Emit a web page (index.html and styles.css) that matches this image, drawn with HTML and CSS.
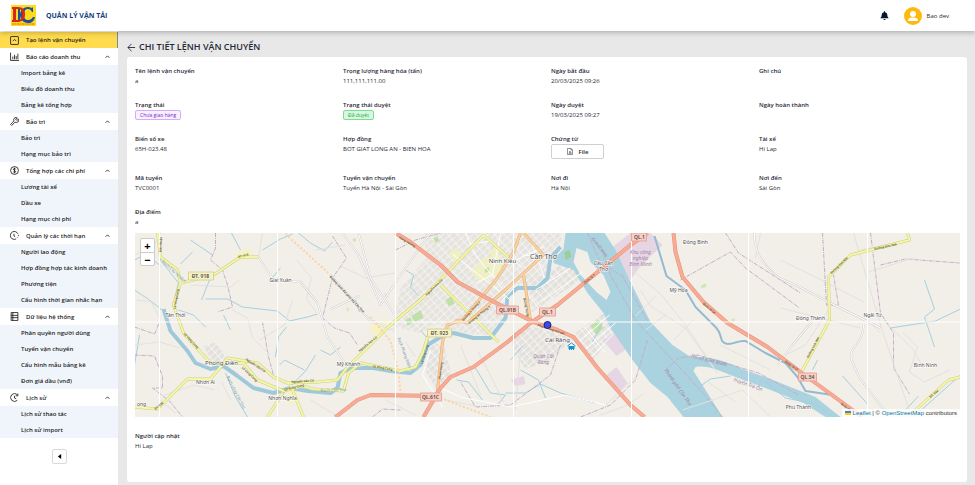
FILE: index.html
```html
<!DOCTYPE html>
<html lang="vi">
<head>
  <meta charset="UTF-8" />
  <meta name="viewport" content="width=device-width, initial-scale=1.0" />
  <title>Quản lý vận tải</title>
  <link rel="stylesheet" href="styles.css">
</head>
<body>
  <header class="topbar">
    <a class="brand" href="#">
      <svg class="logo" viewBox="0 0 25 21" aria-hidden="true">
        <rect width="25" height="21" fill="#fcdb1c"/>
        <path d="M22 2v5h-1c-1-2-2-3-4-3-3 0-4 2-4 6s2 5 4 5 4-1 5-3h2c-1 4-3 6-7 6-5 0-8-4-8-8s3-8 8-8c2 0 3 1 4 1z" fill="#1d4f9c"/>
        <path d="M1 2h6c5 0 7 3 7 7s-2 8-7 8H1v-2h1V4H1zM5 4v11h2c3 0 4-2 4-6s-1-5-4-5z" fill="#d8251d" fill-rule="evenodd"/>
        <path d="M8 4v11" fill="none" stroke="#1d4f9c" stroke-width="2"/>
        <path d="M1 19h23" stroke="#e06c2a" stroke-width="1" stroke-dasharray="2 .5"/>
      </svg>
      <span>QUẢN LÝ VẬN TẢI</span>
    </a>
    <div class="account">
      <button class="bell" aria-label="Thông báo">
        <svg viewBox="0 0 16 16"><path d="M8 0a1 1 0 0 0-1 1v1C4 2.500 3 5 3 7c0 3-1 4-2 5v1h14v-1c-1-1-2-2-2-5 0-2-1-4.500-4-5V1a1 1 0 0 0-1-1zM6 14a2 2 0 0 0 4 0z" fill="#0b1633"/></svg>
      </button>
      <svg class="avatar" viewBox="0 0 18 18" aria-hidden="true">
        <circle cx="9" cy="9" r="9" fill="#ffb80c"/>
        <circle cx="9" cy="7" r="3" fill="#fff"/>
        <path d="M4 14c0-3 2-3.500 5-3.500s5 .5 5 3.500z" fill="#fff"/>
      </svg>
      <span class="user-name">Bao dev</span>
    </div>
  </header>

  <div class="layout">
    <nav class="sidebar">
      <a class="menu-item active" href="#">
        <svg class="icon" viewBox="0 0 16 16"><rect x="1" y="1" width="14" height="14" rx="1"/><path d="M5 9l3-3 3 3"/></svg>
        <span>Tạo lệnh vận chuyển</span>
      </a>

      <button class="menu-item">
        <svg class="icon" viewBox="0 0 16 16"><path d="M1 1v14h15M5 13V8M8 13V5M11 13V7M14 13V3"/></svg>
        <span>Báo cáo doanh thu</span>
        <svg class="caret" viewBox="0 0 8 8"><path d="M1 6l3-3 3 3"/></svg>
      </button>
      <div class="submenu">
        <a href="#">Import bảng kê</a>
        <a href="#">Biểu đồ doanh thu</a>
        <a href="#">Bảng kê tổng hợp</a>
      </div>

      <button class="menu-item">
        <svg class="icon" viewBox="0 0 16 16"><path d="M11 1a4 4 0 0 0-4 6l-6 6 2 2 6-6a4 4 0 0 0 6-5l-3 2-2-2 3-2z"/></svg>
        <span>Bảo trì</span>
        <svg class="caret" viewBox="0 0 8 8"><path d="M1 6l3-3 3 3"/></svg>
      </button>
      <div class="submenu">
        <a href="#">Bảo trì</a>
        <a href="#">Hạng mục bảo trì</a>
      </div>

      <button class="menu-item">
        <svg class="icon" viewBox="0 0 16 16"><circle cx="8" cy="8" r="7"/><path d="M10 6c0-1-1-1.500-2-1.500S6 5 6 6c0 2 4 2 4 4 0 1-1 1.500-2 1.500S6 11 6 10M8 3v10"/></svg>
        <span>Tổng hợp các chi phí</span>
        <svg class="caret" viewBox="0 0 8 8"><path d="M1 6l3-3 3 3"/></svg>
      </button>
      <div class="submenu">
        <a href="#">Lương tài xế</a>
        <a href="#">Dầu xe</a>
        <a href="#">Hạng mục chi phí</a>
      </div>

      <button class="menu-item">
        <svg class="icon" viewBox="0 0 16 16"><path d="M11 14A7 7 0 1 1 14 5M7 5v4l2 1M15 7v2M14 11l-1 1"/></svg>
        <span>Quản lý các thời hạn</span>
        <svg class="caret" viewBox="0 0 8 8"><path d="M1 6l3-3 3 3"/></svg>
      </button>
      <div class="submenu">
        <a href="#">Người lao động</a>
        <a href="#">Hợp đồng hợp tác kinh doanh</a>
        <a href="#">Phương tiện</a>
        <a href="#">Cấu hình thời gian nhắc hạn</a>
      </div>

      <button class="menu-item">
        <svg class="icon" viewBox="0 0 16 16"><path d="M2 1h12v14H2zM2 6h12M2 10h12M5 1v14"/></svg>
        <span>Dữ liệu hệ thống</span>
        <svg class="caret" viewBox="0 0 8 8"><path d="M1 6l3-3 3 3"/></svg>
      </button>
      <div class="submenu">
        <a href="#">Phân quyền người dùng</a>
        <a href="#">Tuyến vận chuyển</a>
        <a href="#">Cấu hình mẫu bảng kê</a>
        <a href="#">Đơn giá dầu (vnđ)</a>
      </div>

      <button class="menu-item">
        <svg class="icon" viewBox="0 0 16 16"><path d="M13 13A7 7 0 1 1 13 3M14 1v4h-4M8 5v4l3 1"/></svg>
        <span>Lịch sử</span>
        <svg class="caret" viewBox="0 0 8 8"><path d="M1 6l3-3 3 3"/></svg>
      </button>
      <div class="submenu">
        <a href="#">Lịch sử thao tác</a>
        <a href="#">Lịch sử import</a>
      </div>

      <button class="collapse" aria-label="Thu gọn">
        <svg viewBox="0 0 6 6"><path d="M5 0v6L1 3z"/></svg>
      </button>
    </nav>

    <main class="content">
      <h1 class="page-title">
        <a href="#" aria-label="Quay lại"><svg viewBox="0 0 10 10"><path d="M9 5H1M5 1L1 5l4 4"/></svg></a>
        CHI TIẾT LỆNH VẬN CHUYỂN
      </h1>

      <section class="card">
        <dl class="details">
          <div><dt>Tên lệnh vận chuyển</dt><dd>a</dd></div>
          <div><dt>Trọng lượng hàng hóa (tấn)</dt><dd>111,111,111.00</dd></div>
          <div><dt>Ngày bắt đầu</dt><dd>20/03/2025 09:26</dd></div>
          <div><dt>Ghi chú</dt><dd></dd></div>
          <div><dt>Trạng thái</dt><dd><span class="tag tag-purple">Chưa giao hàng</span></dd></div>
          <div><dt>Trạng thái duyệt</dt><dd><span class="tag tag-green">Đã duyệt</span></dd></div>
          <div><dt>Ngày duyệt</dt><dd>19/03/2025 09:27</dd></div>
          <div><dt>Ngày hoàn thành</dt><dd></dd></div>
          <div><dt>Biển số xe</dt><dd>65H-023.48</dd></div>
          <div><dt>Hợp đồng</dt><dd>BOT GIAT LONG AN - BIEN HOA</dd></div>
          <div>
            <dt>Chứng từ</dt>
            <dd>
              <button class="file-btn">
                <svg viewBox="0 0 12 14"><path d="M1 1h7l3 3v9H1zM8 1v3h3M4 11l2-5 1 3 2 1-5 1"/></svg>
                File
              </button>
            </dd>
          </div>
          <div><dt>Tài xế</dt><dd>Hi Lap</dd></div>
          <div><dt>Mã tuyến</dt><dd>TVC0001</dd></div>
          <div><dt>Tuyến vận chuyển</dt><dd>Tuyến Hà Nội - Sài Gòn</dd></div>
          <div><dt>Nơi đi</dt><dd>Hà Nội</dd></div>
          <div><dt>Nơi đến</dt><dd>Sài Gòn</dd></div>
          <div><dt>Địa điểm</dt><dd>a</dd></div>
        </dl>

        <div class="map">
          <svg class="map-canvas" viewBox="134 233 826 184" preserveAspectRatio="xMidYMid slice">
            <defs>
              <pattern id="streets" width="7" height="5" patternUnits="userSpaceOnUse" patternTransform="rotate(-42)">
                <rect width="7" height="5" fill="#e6e3df"/>
                <path d="M0 0h7M0 0v5" stroke="#fff" stroke-width="1"/>
                <path d="M3 2h4" stroke="#d0cccb" stroke-width=".4"/>
              </pattern>
              <path id="provincial" d="M157 233l3 24 17 13 3 13 33-8 27-18h18M180 283l-7 22 10 28 27 30 33 0 14 17 26 11 20-5 9 3 31 2 5-18 12-10 40 8 15-4 8-16 4-14 10-8M483 235l-60 62-33 28-43 42-10 13-20 2-30 1-14-6-16-14-30-5-7 9-10 12h-23l-30 30-23-2M440 285l58 57M483 235l28 25M290 385l13 32M282 393l-15 24M907 233l2 7-59 15-22 22 1 43-27 50M960 377l-12 3-35 32"/>
              <path id="secondary" d="M520 233l-7 19-16 26-35 42-15 5-5 17-5 50M523 233l20 22-36 33-40 35-12-3M523 275l7 45"/>
              <path id="trunk" d="M423 417l17-29 10-11 23-10 34-25 23-19 27-18 73-60 17-12M395 233l15 9 30 23 17 17 33 18 43 22 24 8 16 7 24 31 33 37 14 12M440 396l-70-1-13 5-22 17M673 233l2 19 7 25 21 25 24 21 40 24 33 25 52 38 10 7"/>
            </defs>

            <!-- built-up areas -->
            <g fill="url(#streets)">
              <path d="M424 233h138l-3 14-9 10-3 20-11 9-20 1-12 10-2 20-14 18-28-2-23-9-19 9-26-7 8-38 26-30z" opacity=".8"/>
              <path d="M523 283l45-22 14 18-50 33zM512 330l22-3 40 12-24 22-25 8-13-20zM575 333l29-21 14 19-26 29zM430 340l14 8 7 26-16 14-10-17z"/>
              <path d="M203 346l13-4 9 16-12 9z"/>
            </g>
            <g>
              <path d="M233 255l15-7 5 8-14 6zM368 327l20-8-7 16-8-1zM284 393l11-3 5 9-12 6z" fill="#f6f2c4"/>
              <path d="M448 253l8-5 6 8-7 7zM470 272l14-15 18 1-2 14-19 10zM488 251l8-3 4 9-7 3z" fill="#f0f0c6"/>
              <path d="M411 316l9-6 3 8-9 4zM405 320l5-3 2 6-5 3zM445 300l6-4 3 8-6 2zM484 270l4-3 1 4-4 2zM590 326l8-6 5 8-7 7zM433 238l4-1 2 4-4 2z" fill="#bfe0a9"/>
              <path d="M612 247l18-14h20l12 12-22 21-10 14-13-15zM602 340l16-8 8 17-10 7zM606 375l10-8 11 16-9 10zM510 380l13-4 2 8-10 2z" fill="#e6d6e4"/>
              <path d="M700 286l5-3 1 4-5 1zM730 320l4-2 0 4zM352 239l3-1 1 3-3 1zM346 307l3 2-2 3zM384 293l4 3-3 2z" fill="#cce8b4"/>
            </g>

            <!-- rivers -->
            <path class="water" d="M565 233h39l11 17 18 38 17 34 22 23 18 12c18-1 35 4 52 12l33 12 40 16 25 20h-15l-22-14-33-13-35-13c-18-7-28-12-40-10l-2 4 14 22 15 24h-39l-16-20-17-14-18-23-22-32-7-15-16-20-14-23-20-7 0-4 10-10z"/>
            <path d="M576 248l11 4 3 10 13 13 7 17-4 8-10-8-16-17-7-13z" fill="#f2efe9"/>
            <path d="M564 252l5-2 2 7-6 3z" fill="#9ccf93"/>
            <path class="river" d="M560 247l-10 11-3 20-10 10-20 0-10 8-2 22-15 20-17 0-20-5-13 4-13 8-7 20-10 8-20-2-17-3-23 0-10 5-3 15-7 5-23-2-17-3-17 5-20-5-16-12-14-10-13 3-15-6-8-12-17-20-7-22"/>
            <g class="canal">
              <path d="M173 303l5-20-18-23-2-27M134 260l12-6 14 12M134 290l15 10 15 12M178 310l15 5 12 12M201 300l8-20M205 299l22 0 15 8 35 4 12 10 18-4 10-3"/>
              <path d="M134 365l5-30M225 373l10 24 12 20M267 417l18-26 20-20 10-16M304 370l-20-10-5 5M320 350l10 5 10-8M286 327l-8 10-3 20M230 330l-7-15"/>
              <path d="M262 250l18-11 12-5M298 233l12 10 14 8 8-9M270 280l10-12M192 252l-12 12M240 250l-9-17M190 240l22 15M355 300l4 12M405 270l8 5-3 12 8 9M420 330l8 10-5 16"/>
              <path d="M475 368l15 25 15 2-8 10M505 393l20 0 15-9 20 9 35 10M545 398l-7-18-18-10M482 400l-14-18-12-2M510 360l12-14M592 342l10-20"/>
              <path d="M700 386l10-7 20-3M765 382l20 16 30 6 18 13M842 376l25 28M812 370l5-10M924 280l10 29-10 8 10 30M890 328l45-7 25-12M905 410l13-14M913 417l47-42"/>
            </g>
            <path class="stream" d="M654 236l12 40 19 14 10 17 20 20c8 8 3 16 12 17 8 0 10-4 18-3l20 12 20 10 12 14 8 14 27 4"/>

            <!-- administrative borders -->
            <g class="border">
              <path d="M215 233v15l-5 12 12 10 5 15 5 22-15 5M134 327l20 7 5-12M134 355l20 1 8 20 0 12-10 0 17 13 13 16M262 322l6 35 5 18M332 236l14 22-14 20-10 40 12 10 15 5 8 12M372 417l10-8 18 1"/>
              <path d="M395 250l20-10 25-7M600 245l10 30 25 45 35 38 30 32 22 27M587 233l13 30 22 13 25 45M647 340l-12 40-25 25-30 12M680 280l50-28 15 16 54 40M725 233l13 20 62 40M822 233l4 72h12l-5-30M870 233l10 80 13 20 0 35 16 26M880 265l25-6 54 4M665 370l13-12 20-3 60 18 40 22M560 345l-10 30-40 30-35 2-15-25"/>
            </g>

            <!-- small roads -->
            <g class="lane">
              <path d="M134 345l25-3 20 6M164 395l30-10 20 5M136 300l15 2 8 16M190 285l40 2 10-8M296 260l15 18-5 20 10 15M160 233l-8 15-18 7M232 310l15 8 5 20 18 17M258 257l4-24M292 300l-8 25-25 15M230 400l-9-18M310 400l25 15M385 400l30 15M405 342l10 15M445 400l30 6M460 345l20 50M478 352l25 50M520 350l-5 60"/>
              <path d="M632 270l30 26 25 32 30 45M655 296l-20 20M640 290l10 16 35 22 28 40M665 315l-20 15M693 320l-20 20M720 345l50 25M705 380l30 22M682 410l60-20 28 27M760 233l-5 25M853 233l28 95 30 89M870 323l10 10M902 332l15 15-8 25 15 10 25-12M780 260l45 22 38 20M780 308l80 20"/>
              <path d="M605 405l30-28M600 415l25-9 18-12M860 250l40-8M868 272l45-14M830 307l-25 38-24 12M893 330l20 20 10 18M160 400l15 13M315 250l30-5M340 266l25 12 30-5"/>
            </g>
            <g class="road-case">
              <path id="roads" d="M258 257l15 23 27 2 17 21 10 34 20 30M330 275l40 46 25 10M342 233l16 22 22 50 20-30 30-42M359 296l-29 13M358 233l12 45 25 38M754 233c-1 20 10 34 25 45l22 10 35 18 44 22M863 325c0 20-15 20-12 35l8 18 30 39M777 365l15-20 20-24"/>
            </g>
            <g class="road">
              <use href="#roads"/>
              <path d="M440 388l20 9 50 10 55-12 40 10M430 350l-8 25 20 32M540 302l42-30M535 290l35-22M575 345l34-30M581 353l34-30M587 361l25-26M584 327l20 25"/>
              <path d="M465 233l10 22 28 35M500 233l-8 42-17 8M452 254l58 46M488 240l34 28M523 255l23 2M530 240l14 38M505 265l38-18M524 290l17 22M517 284l-20 22M470 244l22-3"/>
            </g>

            <!-- provincial and main roads -->
            <use class="yellow-case" href="#provincial"/>
            <use class="yellow-line" href="#provincial"/>
            <use class="orange-case" href="#secondary"/>
            <use class="orange-line" href="#secondary"/>
            <path class="works" d="M285 234l45 41M370 317l20 24 8 30 2 22M440 398l50 19"/>
            <use class="trunk-case" href="#trunk"/>
            <use class="trunk-line" href="#trunk"/>

            <!-- tile seams -->
            <path class="seam" d="M159 233v184M277 233v184M395 233v184M513 233v184M631 233v184M748 233v184M867 233v184M134 322h826"/>

            <g class="shield provincial">
              <rect x="188" y="272" width="25" height="8"/>
              <rect x="427" y="329" width="24" height="8"/>
              <text x="200" y="278">ĐT. 918</text>
              <text x="439" y="335">ĐT. 923</text>
            </g>
            <g class="shield">
              <rect x="496" y="306" width="22" height="8"/>
              <rect x="539" y="308" width="16" height="8"/>
              <rect x="420" y="393" width="21" height="8"/>
              <rect x="631" y="233" width="15" height="8"/>
              <rect x="798" y="373" width="18" height="8"/>
              <text x="507" y="312">QL.91B</text>
              <text x="547" y="314">QL.1</text>
              <text x="430" y="399">QL.61C</text>
              <text x="639" y="239">QL.1</text>
              <text x="807" y="379">QL.54</text>
            </g>

            <g class="road-name">
              <text transform="translate(161 252) rotate(-88)">Bức thuận</text>
              <text transform="translate(175 309) rotate(-80)">Lộ Vòng Cung</text>
              <text transform="translate(183 334) rotate(47)">Lộ Vòng Cung</text>
              <text transform="translate(238 258) rotate(-15)">ĐT. 918</text>
              <text transform="translate(329 277) rotate(47)">Đường vành đai phía tây Cần Thơ</text>
              <text transform="translate(245 360) rotate(33)">Nguyễn Văn Cừ</text>
              <text transform="translate(241 368) rotate(43)">Lộ Vòng Cung</text>
              <text transform="translate(291 383) rotate(-4)">Nguyễn Văn Cừ</text>
              <text transform="translate(284 391) rotate(-14)">Lộ Vòng Cung</text>
              <text transform="translate(359 352) rotate(-39)">Nguyễn Văn Cừ</text>
              <text transform="translate(372 367) rotate(10)">Lộ Vòng Cung</text>
              <text transform="translate(426 296) rotate(-44)">Nguyễn Văn Cừ</text>
              <text transform="translate(422 364) rotate(-72)">Lộ Vòng Cung</text>
              <text transform="translate(463 321) rotate(-48)">Đường 3 Tháng 2</text>
              <text transform="translate(469 324) rotate(-39)">Đường 30 Tháng 4</text>
              <text transform="translate(523 298) rotate(80)">Quang Trung</text>
              <text transform="translate(440 379) rotate(-82)">Phạm Hùng</text>
              <text transform="translate(155 410) rotate(-39)">ĐT. 926</text>
              <text transform="translate(537 326) rotate(18)">Phạm Hùng nối dài</text>
              <text transform="translate(584 284) rotate(-39)">Quốc lộ 1</text>
              <text transform="translate(398 238) rotate(30)">Hùng Vương</text>
              <text transform="translate(702 304) rotate(40)">Quốc lộ 54</text>
              <text transform="translate(784 362) rotate(34)">Quốc lộ 54</text>
              <text transform="translate(840 404) rotate(38)">Quốc lộ</text>
              <text transform="translate(831 274) rotate(-43)">Đường tỉnh 909</text>
              <text transform="translate(874 250) rotate(-12)">Đường tỉnh 909</text>
              <text transform="translate(808 358) rotate(-61)">Đường tỉnh 909</text>
              <text transform="translate(930 398) rotate(-39)">ĐT. 904</text>
            </g>

            <g class="water-name">
              <text transform="translate(161 262) rotate(42)">Rạch Cầu Nhiếm</text>
              <text transform="translate(226 377) rotate(63)">Rạch sông Cần Thơ</text>
              <text transform="translate(397 338) rotate(70)">Rạch Phong Điền</text>
              <text transform="translate(320 392) rotate(-2)">Rạch Cần Thơ</text>
            </g>

            <g class="place">
              <text x="280" y="282">Giai Xuân</text>
              <text x="175" y="317">Tân Thới</text>
              <text x="221" y="365" class="town">Phong Điền</text>
              <text x="205" y="384">Nhơn Ái</text>
              <text x="282" y="400">Nhơn Nghĩa</text>
              <text x="348" y="366">Mỹ Khánh</text>
              <text x="141" y="406">ong</text>
              <text x="502" y="263" class="town">Ninh Kiều</text>
              <text x="543" y="259" class="city">Cần Thơ</text>
              <text x="557" y="342" class="town">Cái Răng</text>
              <text x="603" y="265">Cầu Cần</text>
              <text x="603" y="271">Thơ</text>
              <text x="695" y="244">Đông Bình</text>
              <text x="678" y="292">Mỹ Hòa</text>
              <text x="810" y="320">Đông Thành</text>
              <text x="872" y="317">Ngãi Tứ</text>
              <text x="925" y="367">Bình Ninh</text>
              <text x="798" y="409">Phú Thành</text>
            </g>
            <g class="district">
              <text x="543" y="358">Quận Cái</text>
              <text x="543" y="364">Răng</text>
              <text x="640" y="254">Khu công</text>
              <text x="640" y="260">nghiệp</text>
              <text x="640" y="266">Bình Minh</text>
              <text transform="translate(708 362) rotate(14)">Thị xã Bình Minh</text>
              <text transform="translate(747 386) rotate(20)">Huyện Trà Ôn</text>
              <text transform="translate(676 388) rotate(55)">Thành phố Cần Thơ</text>
              <text class="minor" transform="translate(598 248) rotate(52)">Xã Bình Minh</text>
            </g>

            <path d="M568 346h6v3h-6z" fill="#1591d1"/>
            <path d="M567 346l4-3 4 3M569 347v3M571 347v3M573 347v3" fill="#fff" stroke="#1591d1" stroke-width="1"/>
            <circle cx="547" cy="325" r="3.500" fill="#3f49e8" stroke="#20207c" stroke-width="1"/>
          </svg>

          <div class="zoom-control">
            <button aria-label="Phóng to">+</button>
            <button aria-label="Thu nhỏ">−</button>
          </div>
          <div class="attribution">
            <a href="#"><svg viewBox="0 0 12 8"><path fill="#4c7be1" d="M0 0h12v4H0z"/><path fill="#ffd500" d="M0 4h12v4H0z"/></svg> Leaflet</a>
            | © <a href="#">OpenStreetMap</a> contributors
          </div>
        </div>

        <dl class="details">
          <div><dt>Người cập nhật</dt><dd>Hi Lap</dd></div>
        </dl>
      </section>
    </main>
  </div>
</body>
</html>
```
FILE: styles.css
```css
:root {
  --page-bg: #e8e8e8;
  --text: #1f2937;
  --navy: #173f82;
  --active: #ffdb4d;
  --submenu-bg: #f0f5fb;
}

* {
  box-sizing: border-box;
  margin: 0;
  padding: 0;
}

body {
  display: flex;
  flex-direction: column;
  min-height: 100vh;
  font-family: "Open Sans", "Noto Sans", sans-serif;
  font-size: 6px;
  line-height: 10px;
  color: var(--text);
  background: var(--page-bg);
}

button {
  font: inherit;
  color: inherit;
  background: none;
  border: none;
  cursor: pointer;
}

a {
  color: inherit;
  text-decoration: none;
}

/* Top bar */
.topbar {
  display: flex;
  align-items: center;
  justify-content: space-between;
  height: 31px;
  padding: 0 26px 0 11px;
  background: #fff;
  box-shadow: 0 1px 6px rgba(0, 0, 0, 0.3);
  z-index: 1;
}

.brand {
  display: flex;
  align-items: center;
  gap: 10px;
  font-size: 7px;
  font-weight: 700;
  color: var(--navy);
}

.logo {
  width: 25px;
  height: 21px;
}

.account {
  display: flex;
  align-items: center;
}

.bell {
  display: flex;
  margin-right: 15px;
}

.bell svg {
  width: 9px;
  height: 9px;
}

.avatar {
  width: 18px;
  height: 18px;
  margin-right: 5px;
}

/* Sidebar */
.layout {
  display: flex;
  flex: 1;
}

.sidebar {
  display: flex;
  flex-direction: column;
  width: 118px;
  padding-top: 1px;
  background: #fff;
  flex-shrink: 0;
}

.menu-item {
  display: flex;
  align-items: center;
  gap: 7px;
  height: 17px;
  padding: 0 8px 0 10px;
  font-weight: 600;
  text-align: left;
  color: #1c1c1c;
}

.menu-item.active {
  height: 16px;
  background: var(--active);
  border-right: 1px solid #7787a5;
}

.icon {
  width: 9px;
  height: 9px;
  fill: none;
  stroke: #1c1c1c;
  stroke-width: 1.5;
}

.caret {
  width: 5px;
  height: 5px;
  margin-left: auto;
  fill: none;
  stroke: #333;
  stroke-width: 1.5;
}

.submenu {
  background: var(--submenu-bg);
}

.submenu a {
  display: block;
  padding-left: 21px;
  font-weight: 600;
  line-height: 16px;
  white-space: nowrap;
  color: #1c1c1c;
}

.collapse {
  display: flex;
  align-items: center;
  justify-content: center;
  align-self: center;
  width: 15px;
  height: 15px;
  margin-top: 11px;
  border: 1px solid #d9d9d9;
  border-radius: 2px;
}

.collapse svg {
  width: 5px;
  height: 5px;
}

/* Content */
.content {
  display: flex;
  flex-direction: column;
  flex: 1;
  min-width: 0;
  padding: 10px 8px 3px 9px;
}

.page-title {
  display: flex;
  align-items: center;
  gap: 3px;
  margin-bottom: 4px;
  font-size: 9px;
  font-weight: 600;
  line-height: 12px;
}

.page-title a {
  display: flex;
}

.page-title svg {
  width: 9px;
  height: 9px;
  fill: none;
  stroke: currentColor;
  stroke-width: 1;
}

.card {
  flex: 1;
  padding: 9px 7px 9px 8px;
  background: #fff;
  border-radius: 3px;
}

.details {
  display: grid;
  grid-template-columns: repeat(4, 1fr);
  gap: 14px 7px;
}

.details dt {
  font-weight: 600;
}

.details dd {
  min-height: 10px;
}

.tag {
  display: block;
  width: fit-content;
  padding: 0 4px;
  font-size: 5px;
  line-height: 8px;
  border: 1px solid;
  border-radius: 2px;
}

.tag-purple {
  color: #722ed1;
  background: #f9f0ff;
  border-color: #d3adf7;
}

.tag-green {
  color: #22a843;
  background: #d9f7df;
  border-color: #7edb92;
}

.file-btn {
  display: flex;
  align-items: center;
  justify-content: center;
  gap: 6px;
  width: 53px;
  height: 15px;
  font-weight: 600;
  border: 1px solid #d0d0d0;
  border-radius: 2px;
}

.file-btn svg {
  width: 6px;
  height: 7px;
  fill: none;
  stroke: currentColor;
  stroke-width: 1;
}

/* Map */
.map {
  position: relative;
  height: 184px;
  margin: 6px 0 14px;
  overflow: hidden;
  background: #f2efe9;
}

.map-canvas {
  display: block;
  width: 100%;
  height: 100%;
  font-family: "Noto Sans", sans-serif;
  stroke-linejoin: round;
}

.water {
  fill: #aad3df;
}

.river {
  fill: none;
  stroke: #9fc9da;
  stroke-width: 4;
}

.stream {
  fill: none;
  stroke: #94b9d1;
  stroke-width: 2;
}

.canal {
  fill: none;
  stroke: #a5cfdf;
  stroke-width: 1;
}

.border {
  fill: none;
  stroke: #c4adc6;
  stroke-width: 1;
  stroke-dasharray: 4 1 1 1;
}

.lane {
  fill: none;
  stroke: #e3e1df;
  stroke-width: 1;
}

.road-case {
  fill: none;
  stroke: #d3d1d0;
  stroke-width: 2;
}

/* #roads sits in .road-case, so its copy takes the stroke from here */
.road {
  fill: none;
  stroke: #fff;
  stroke-width: 1;
}

.yellow-case {
  fill: none;
  stroke: #cdd07f;
  stroke-width: 3;
}

.yellow-line {
  fill: none;
  stroke: #f4f5a9;
  stroke-width: 2;
}

.orange-case {
  fill: none;
  stroke: #e3ad75;
  stroke-width: 3;
}

.orange-line {
  fill: none;
  stroke: #fad1a0;
  stroke-width: 2;
}

.works {
  fill: none;
  stroke: #fbd3a5;
  stroke-width: 2;
  stroke-dasharray: 2 2;
}

.trunk-case {
  fill: none;
  stroke: #e8907a;
  stroke-width: 4;
}

.trunk-line {
  fill: none;
  stroke: #f8ab94;
  stroke-width: 3;
}

.seam {
  stroke: #fff;
  stroke-width: 1;
}

.shield rect {
  fill: #f7cfc4;
  stroke: #e6a698;
  stroke-width: 1;
}

.shield.provincial rect {
  fill: #f3f2c9;
  stroke: #d6d594;
}

.shield text {
  font-size: 5px;
  font-weight: 600;
  text-anchor: middle;
  fill: #5c4640;
}

.road-name {
  font-size: 3px;
  font-weight: 600;
  fill: #54502f;
}

.water-name {
  font-size: 4px;
  fill: #6c9bb8;
}

.place {
  font-size: 5px;
  text-anchor: middle;
  fill: #4a4a4a;
  stroke: #fff;
  stroke-width: 1;
  paint-order: stroke;
}

.place .town {
  font-size: 6px;
}

.place .city {
  font-size: 7px;
}

.district {
  font-size: 5px;
  font-style: italic;
  text-anchor: middle;
  fill: #a184a6;
}

.district .minor {
  font-size: 4px;
}

.zoom-control {
  position: absolute;
  top: 5px;
  left: 5px;
  display: flex;
  flex-direction: column;
  background: #fff;
  border: 1px solid #cfccc8;
  border-radius: 2px;
}

.zoom-control button {
  width: 13px;
  height: 13px;
  font-size: 11px;
  font-weight: 700;
  line-height: 11px;
  color: #000;
}

.zoom-control button + button {
  border-top: 1px solid #ccc;
}

.attribution {
  position: absolute;
  right: 0;
  bottom: 0;
  padding: 0 3px;
  font-family: "Liberation Sans", sans-serif;
  font-size: 6px;
  line-height: 8px;
  color: #333;
  background: rgba(255, 255, 255, 0.8);
}

.attribution a {
  color: #0078a8;
}

.attribution svg {
  width: 6px;
  height: 4px;
}
```
